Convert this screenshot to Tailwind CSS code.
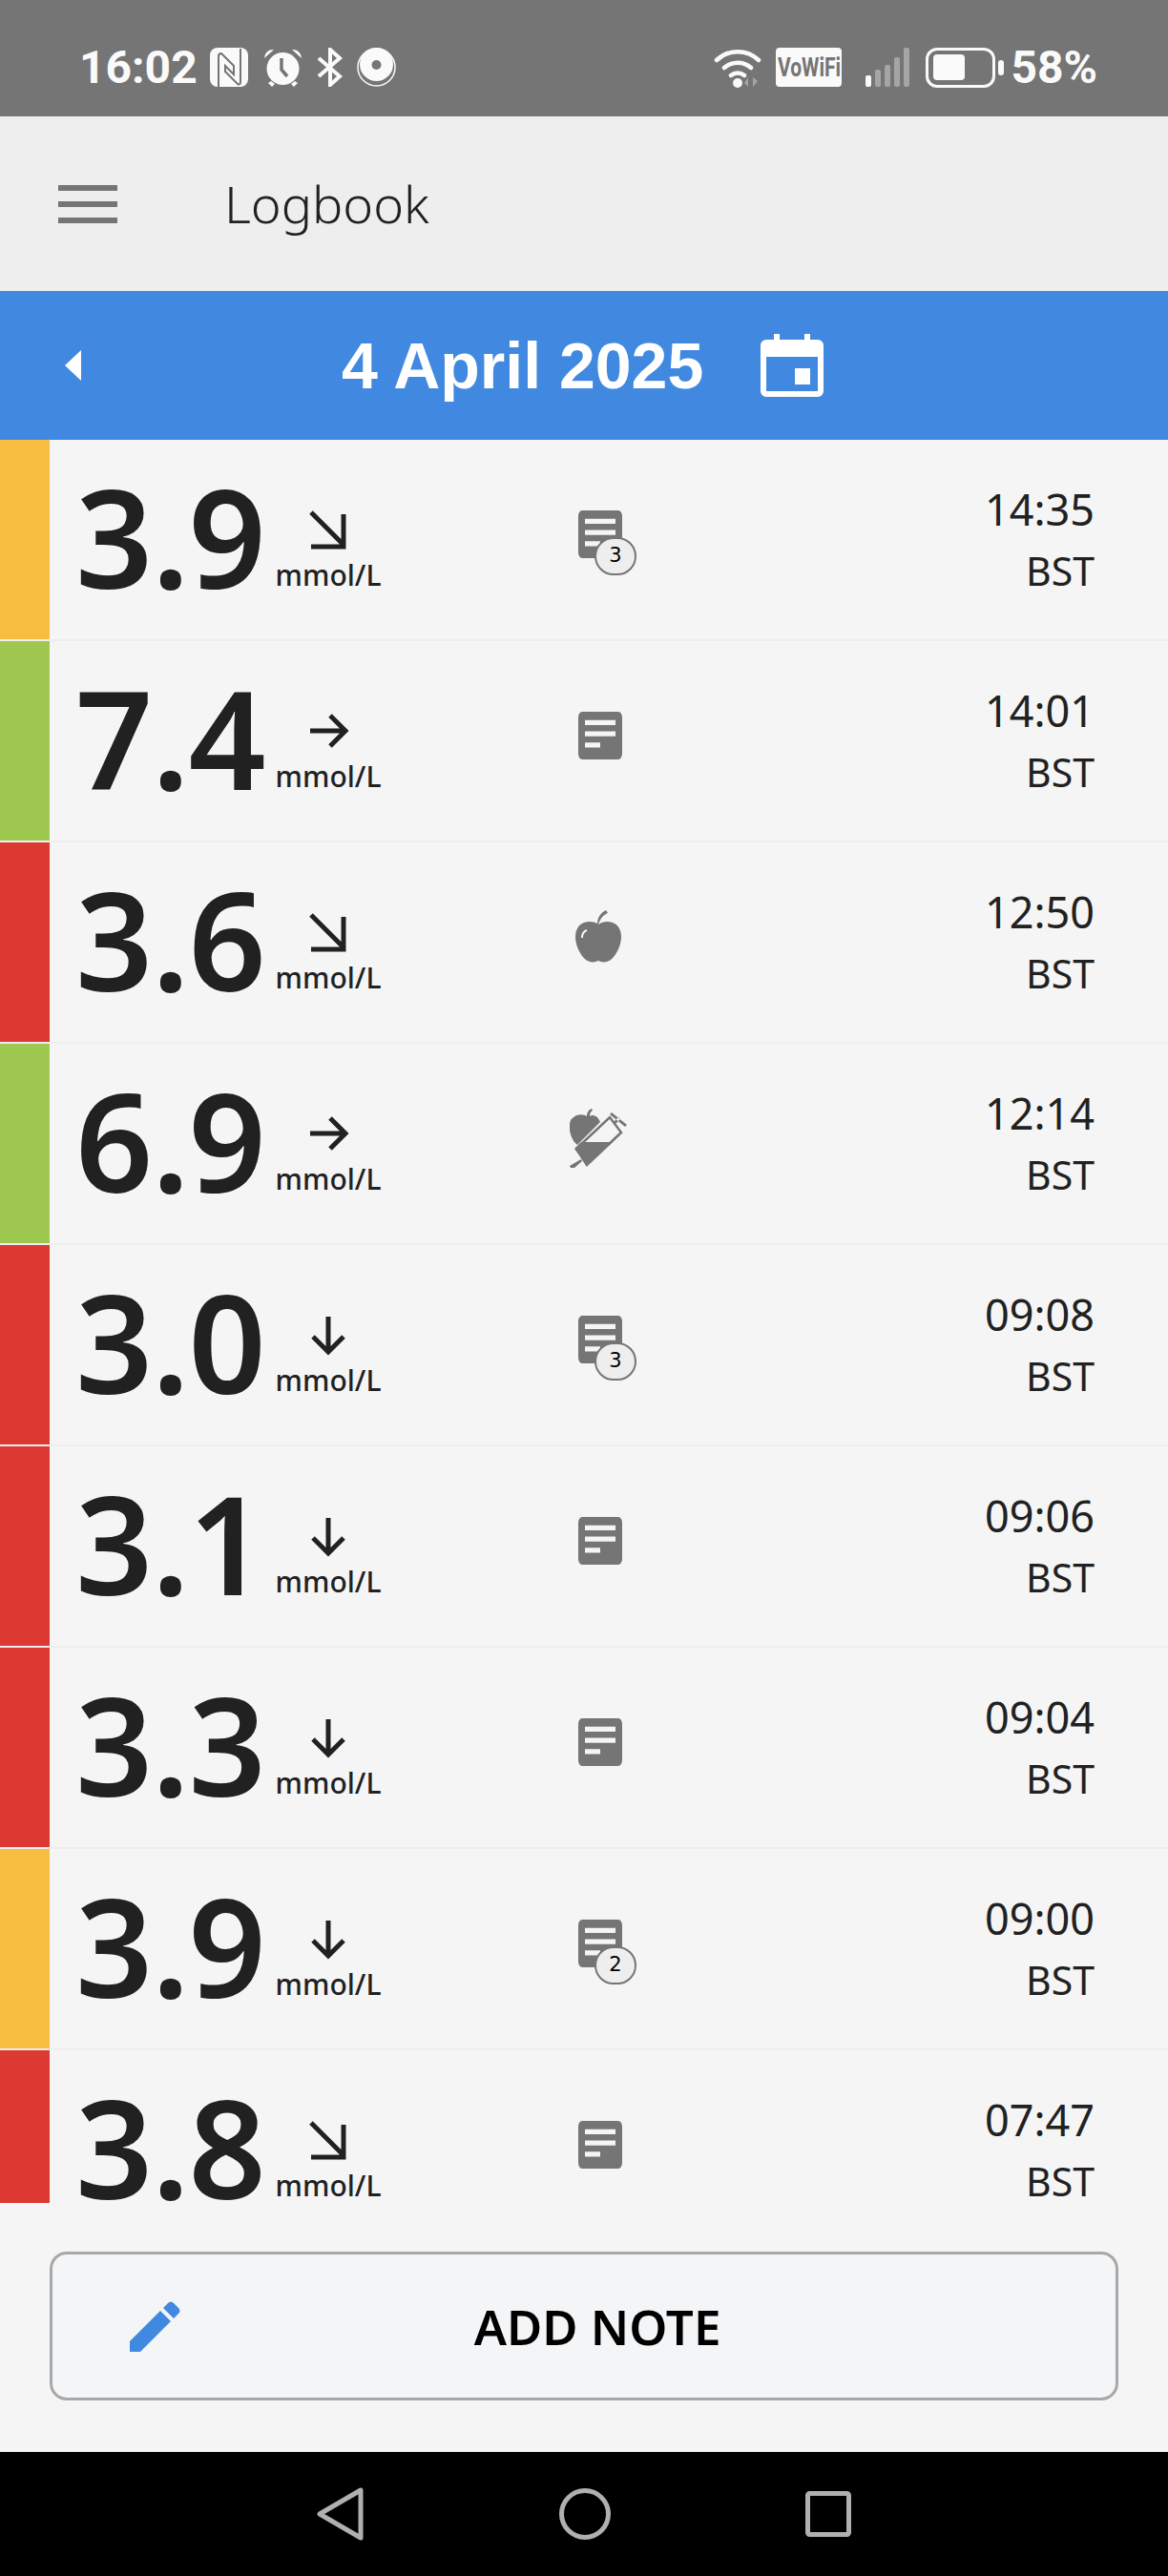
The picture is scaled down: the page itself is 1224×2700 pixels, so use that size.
<!DOCTYPE html>
<html lang="en">
<head>
<meta charset="UTF-8">
<title>Logbook</title>
<script src="https://cdn.jsdelivr.net/npm/@tailwindcss/browser@4"></script>
</head>
<body class="bg-[#f5f5f5] font-['Noto_Sans',sans-serif] text-[#212121]">
<svg class="hidden">
  <symbol id="note" viewBox="0 0 46 34" preserveAspectRatio="none"><path fill-rule="evenodd" fill="#757575" d="M4 0h38a4 4 0 0 1 4 4v26a4 4 0 0 1-4 4H4a4 4 0 0 1-4-4V4a4 4 0 0 1 4-4zM7 6v3.5h32V6zM7 14v3.5h32V14zM7 22v3.5h16V22z"/></symbol>
  <symbol id="down" viewBox="0 0 44 44"><path d="M22 3v36M6 24l16 16 16-16" fill="none" stroke="#212121" stroke-width="5"/></symbol>
  <symbol id="right" viewBox="0 0 44 44"><path d="M3 22h36M24 6l16 16-16 16" fill="none" stroke="#212121" stroke-width="5"/></symbol>
  <symbol id="diag" viewBox="0 0 44 44"><path d="M4 4l34 34M38 6v34H4" fill="none" stroke="#212121" stroke-width="5"/></symbol>
</svg>

<div class="flex h-[2700px] w-[1224px] flex-col overflow-hidden">
  <!-- status bar -->
  <div class="flex h-[122px] items-center justify-between bg-[#757575] pl-[83px] pr-[74px] pt-[19px] text-[#fafafa]">
    <div class="flex items-center">
      <span class="font-['Roboto',sans-serif] text-[48px] font-bold leading-none">16:02</span>
      <svg class="ml-[13px]" width="40" height="41" viewBox="0 0 40 41"><rect width="40" height="41" rx="8" fill="#fafafa"/><path d="M9 41V9c0-2 1-3 3-3l13 13v9l-9-9v6l13 13c2 1 3 0 3-2V1" fill="none" stroke="#757575" stroke-width="2"/></svg>
      <svg class="ml-[16px]" width="41" height="41" viewBox="0 0 41 41"><circle cx="20.5" cy="22" r="17" fill="#fafafa"/><path fill="#fafafa" d="M1 11a9 9 0 0 1 10-9zM40 11a9 9 0 0 0-10-9zM5 37l4 4 3-3-4-3zM36 37l-4 4-3-3 4-3z"/><path d="M19 11v12l6 7" fill="none" stroke="#757575" stroke-width="3.5"/></svg>
      <svg class="ml-[15px]" width="27" height="41" viewBox="0 0 27 41"><path d="M2 11l22 19-10 9V2l10 9L2 30" fill="none" stroke="#fafafa" stroke-width="4"/></svg>
      <svg class="ml-[15px]" width="41" height="41" viewBox="0 0 41 41"><circle cx="20.5" cy="20.5" r="19.5" fill="none" stroke="#fafafa" stroke-width="1.5"/><circle cx="20.5" cy="17.5" r="17.5" fill="#fafafa"/><circle cx="20.5" cy="18" r="5" fill="#757575"/></svg>
    </div>
    <div class="flex items-center">
      <svg width="52" height="44" viewBox="0 0 52 44"><path d="M3 14a32 32 0 0 1 44 0M11 22a21 21 0 0 1 28 0M18 30a11 11 0 0 1 14 0" fill="none" stroke="#fafafa" stroke-width="4.5" stroke-linecap="round"/><circle cx="25" cy="38" r="5" fill="#fafafa"/><path d="M36 42V32l-4 6zM41 32v10l5-6z" fill="#a5a5a5"/></svg>
      <span class="ml-[13px] flex h-[41px] w-[69px] items-center justify-center rounded-[4px] bg-[#fafafa] font-['Roboto',sans-serif] text-[28px] font-bold text-[#757575]"><span class="inline-block scale-x-75">VoWiFi</span></span>
      <div class="ml-[25px] flex h-[41px] w-[46px] items-end justify-between">
        <span class="h-[12px] w-[6px] rounded-[2px] bg-[#fafafa]"></span>
        <span class="h-[18px] w-[6px] rounded-[2px] bg-[#a5a5a5]"></span>
        <span class="h-[23px] w-[6px] rounded-[2px] bg-[#a5a5a5]"></span>
        <span class="h-[31px] w-[6px] rounded-[2px] bg-[#a5a5a5]"></span>
        <span class="h-[41px] w-[6px] rounded-[2px] bg-[#a5a5a5]"></span>
      </div>
      <div class="ml-[17px] flex h-[42px] w-[73px] items-center rounded-[12px] border-[3px] border-[#fafafa] pl-[5px]">
        <span class="h-[27px] w-[33px] rounded-[4px] bg-[#fafafa]"></span>
      </div>
      <span class="ml-[3px] h-[16px] w-[6px] rounded-[3px] bg-[#fafafa]"></span>
      <span class="ml-[7px] font-['Roboto',sans-serif] text-[48px] font-bold leading-none">58%</span>
    </div>
  </div>

  <!-- app bar -->
  <div class="flex h-[183px] items-center bg-[#eeeeee] pl-[61px]">
    <div class="flex w-[62px] flex-col gap-[11px]">
      <span class="h-[6px] bg-[#757575]"></span>
      <span class="h-[6px] bg-[#757575]"></span>
      <span class="h-[6px] bg-[#757575]"></span>
    </div>
    <span class="mb-[2px] ml-[112px] text-[54px] font-light leading-none">Logbook</span>
  </div>

  <!-- date bar -->
  <div class="flex h-[156px] items-center bg-[#4189e0] text-white">
    <svg class="ml-[68px]" width="18" height="32" viewBox="0 0 18 32"><path d="M17 0v32L0 16z" fill="#fff"/></svg>
    <span class="ml-[272px] font-['Liberation_Sans',sans-serif] text-[68px] font-bold leading-none">4 April 2025</span>
    <svg class="ml-[60px]" width="66" height="66" viewBox="0 0 66 66"><path fill="#fff" fill-rule="evenodd" d="M14 0h6v6h26V0h6v6h8a6 6 0 0 1 6 6v48a6 6 0 0 1-6 6H6a6 6 0 0 1-6-6V12a6 6 0 0 1 6-6h8zM6 24v36h54V24zM36 36h16v17H36z"/></svg>
  </div>

  <!-- readings -->
  <div class="h-[1848px] overflow-hidden">
    <div class="flex h-[211px] border-b-2 border-[#eeeeee]">
      <div class="w-[52px] bg-[#f6bd41]"></div>
      <div class="ml-[27px] w-[206px] text-[142px] font-semibold leading-[202px] tracking-[-1px]">3.9</div>
      <div class="ml-[2px] flex w-[114px] flex-col items-center pt-[72px]"><svg width="44" height="44"><use href="#diag"/></svg><span class="mt-[8px] text-[30px] font-medium leading-[36px]">mmol/L</span></div>
      <div class="ml-[205px] flex w-[64px] items-center pb-[12px]"><div class="relative"><svg class="block" width="46" height="50"><use href="#note"/></svg><span class="absolute left-[17px] top-[28px] flex h-[40px] w-[44px] items-center justify-center rounded-full border-2 border-[#757575] bg-[#eeeeee] font-['DejaVu_Sans',sans-serif] text-[21px] leading-none text-black">3</span></div></div>
      <div class="ml-auto mr-[77px] flex flex-col items-end pt-[41px] leading-[64px]"><span class="text-[45px]">14:35</span><span class="text-[41px]">BST</span></div>
    </div>
    <div class="flex h-[211px] border-b-2 border-[#eeeeee]">
      <div class="w-[52px] bg-[#9fc851]"></div>
      <div class="ml-[27px] w-[206px] text-[142px] font-semibold leading-[202px] tracking-[-1px]">7.4</div>
      <div class="ml-[2px] flex w-[114px] flex-col items-center pt-[72px]"><svg width="44" height="44"><use href="#right"/></svg><span class="mt-[8px] text-[30px] font-medium leading-[36px]">mmol/L</span></div>
      <div class="ml-[205px] flex w-[64px] items-center pb-[12px]"><svg width="46" height="50"><use href="#note"/></svg></div>
      <div class="ml-auto mr-[77px] flex flex-col items-end pt-[41px] leading-[64px]"><span class="text-[45px]">14:01</span><span class="text-[41px]">BST</span></div>
    </div>
    <div class="flex h-[211px] border-b-2 border-[#eeeeee]">
      <div class="w-[52px] bg-[#dd3933]"></div>
      <div class="ml-[27px] w-[206px] text-[142px] font-semibold leading-[202px] tracking-[-1px]">3.6</div>
      <div class="ml-[2px] flex w-[114px] flex-col items-center pt-[72px]"><svg width="44" height="44"><use href="#diag"/></svg><span class="mt-[8px] text-[30px] font-medium leading-[36px]">mmol/L</span></div>
      <div class="ml-[205px] flex w-[64px] items-center pb-[12px]"><svg class="-ml-[3px]" width="48" height="56" viewBox="0 0 48 56"><path fill="#757575" d="M24 15c4-3 10-4 15-2 6 2 9 8 9 15 0 9-5 19-11 24-4 3-9 3-13 1-4 2-9 2-13-1C5 47 0 37 0 28c0-7 3-13 9-15 5-2 11-1 14 1 0-6 3-11 9-14l2 3c-5 2-8 6-10 12z"/><path d="M7 29c0-4 2-7 5-8" fill="none" stroke="#f5f5f5" stroke-width="2"/></svg></div>
      <div class="ml-auto mr-[77px] flex flex-col items-end pt-[41px] leading-[64px]"><span class="text-[45px]">12:50</span><span class="text-[41px]">BST</span></div>
    </div>
    <div class="flex h-[211px] border-b-2 border-[#eeeeee]">
      <div class="w-[52px] bg-[#9fc851]"></div>
      <div class="ml-[27px] w-[206px] text-[142px] font-semibold leading-[202px] tracking-[-1px]">6.9</div>
      <div class="ml-[2px] flex w-[114px] flex-col items-center pt-[72px]"><svg width="44" height="44"><use href="#right"/></svg><span class="mt-[8px] text-[30px] font-medium leading-[36px]">mmol/L</span></div>
      <div class="ml-[205px] flex w-[64px] items-center pb-[12px]"><svg class="-ml-[9px] shrink-0" width="60" height="62" viewBox="0 0 60 62"><path fill="#757575" d="M3 10C8 5 15 6 18 8c0-4 2-7 5-8l1 2c-2 1-3 3-3 6 3-2 8-1 11 6L8 38C3 34-1 25 0 17c0-3 1-6 3-7z"/><path fill="none" stroke="#757575" stroke-width="2.5" d="M7 42L42 9l12 16-36 34z"/><path fill="#757575" d="M12 35h33L18 60 5 42zM12 53l-12 7 1 2h4l8-7zM48 16l5-5-2-2-5 5zM44 4l16 13-2 2L42 6z"/></svg></div>
      <div class="ml-auto mr-[77px] flex flex-col items-end pt-[41px] leading-[64px]"><span class="text-[45px]">12:14</span><span class="text-[41px]">BST</span></div>
    </div>
    <div class="flex h-[211px] border-b-2 border-[#eeeeee]">
      <div class="w-[52px] bg-[#dd3933]"></div>
      <div class="ml-[27px] w-[206px] text-[142px] font-semibold leading-[202px] tracking-[-1px]">3.0</div>
      <div class="ml-[2px] flex w-[114px] flex-col items-center pt-[72px]"><svg width="44" height="44"><use href="#down"/></svg><span class="mt-[8px] text-[30px] font-medium leading-[36px]">mmol/L</span></div>
      <div class="ml-[205px] flex w-[64px] items-center pb-[12px]"><div class="relative"><svg class="block" width="46" height="50"><use href="#note"/></svg><span class="absolute left-[17px] top-[28px] flex h-[40px] w-[44px] items-center justify-center rounded-full border-2 border-[#757575] bg-[#eeeeee] font-['DejaVu_Sans',sans-serif] text-[21px] leading-none text-black">3</span></div></div>
      <div class="ml-auto mr-[77px] flex flex-col items-end pt-[41px] leading-[64px]"><span class="text-[45px]">09:08</span><span class="text-[41px]">BST</span></div>
    </div>
    <div class="flex h-[211px] border-b-2 border-[#eeeeee]">
      <div class="w-[52px] bg-[#dd3933]"></div>
      <div class="ml-[27px] w-[206px] text-[142px] font-semibold leading-[202px] tracking-[-1px]">3.1</div>
      <div class="ml-[2px] flex w-[114px] flex-col items-center pt-[72px]"><svg width="44" height="44"><use href="#down"/></svg><span class="mt-[8px] text-[30px] font-medium leading-[36px]">mmol/L</span></div>
      <div class="ml-[205px] flex w-[64px] items-center pb-[12px]"><svg width="46" height="50"><use href="#note"/></svg></div>
      <div class="ml-auto mr-[77px] flex flex-col items-end pt-[41px] leading-[64px]"><span class="text-[45px]">09:06</span><span class="text-[41px]">BST</span></div>
    </div>
    <div class="flex h-[211px] border-b-2 border-[#eeeeee]">
      <div class="w-[52px] bg-[#dd3933]"></div>
      <div class="ml-[27px] w-[206px] text-[142px] font-semibold leading-[202px] tracking-[-1px]">3.3</div>
      <div class="ml-[2px] flex w-[114px] flex-col items-center pt-[72px]"><svg width="44" height="44"><use href="#down"/></svg><span class="mt-[8px] text-[30px] font-medium leading-[36px]">mmol/L</span></div>
      <div class="ml-[205px] flex w-[64px] items-center pb-[12px]"><svg width="46" height="50"><use href="#note"/></svg></div>
      <div class="ml-auto mr-[77px] flex flex-col items-end pt-[41px] leading-[64px]"><span class="text-[45px]">09:04</span><span class="text-[41px]">BST</span></div>
    </div>
    <div class="flex h-[211px] border-b-2 border-[#eeeeee]">
      <div class="w-[52px] bg-[#f6bd41]"></div>
      <div class="ml-[27px] w-[206px] text-[142px] font-semibold leading-[202px] tracking-[-1px]">3.9</div>
      <div class="ml-[2px] flex w-[114px] flex-col items-center pt-[72px]"><svg width="44" height="44"><use href="#down"/></svg><span class="mt-[8px] text-[30px] font-medium leading-[36px]">mmol/L</span></div>
      <div class="ml-[205px] flex w-[64px] items-center pb-[12px]"><div class="relative"><svg class="block" width="46" height="50"><use href="#note"/></svg><span class="absolute left-[17px] top-[28px] flex h-[40px] w-[44px] items-center justify-center rounded-full border-2 border-[#757575] bg-[#eeeeee] font-['DejaVu_Sans',sans-serif] text-[21px] leading-none text-black">2</span></div></div>
      <div class="ml-auto mr-[77px] flex flex-col items-end pt-[41px] leading-[64px]"><span class="text-[45px]">09:00</span><span class="text-[41px]">BST</span></div>
    </div>
    <div class="flex h-[211px] border-b-2 border-[#eeeeee]">
      <div class="w-[52px] bg-[#dd3933]"></div>
      <div class="ml-[27px] w-[206px] text-[142px] font-semibold leading-[202px] tracking-[-1px]">3.8</div>
      <div class="ml-[2px] flex w-[114px] flex-col items-center pt-[72px]"><svg width="44" height="44"><use href="#diag"/></svg><span class="mt-[8px] text-[30px] font-medium leading-[36px]">mmol/L</span></div>
      <div class="ml-[205px] flex w-[64px] items-center pb-[12px]"><svg width="46" height="50"><use href="#note"/></svg></div>
      <div class="ml-auto mr-[77px] flex flex-col items-end pt-[41px] leading-[64px]"><span class="text-[45px]">07:47</span><span class="text-[41px]">BST</span></div>
    </div>
  </div>

  <!-- add note -->
  <div class="flex h-[261px] items-start bg-[#f5f5f5] px-[52px] pt-[51px]">
    <div class="relative flex h-[156px] w-full items-center justify-center rounded-[18px] border-[3px] border-[#a8a8a8] bg-[#f4f5f7]">
      <svg class="absolute left-[81px] top-[48px]" width="54" height="54" viewBox="0 0 54 54"><path fill="#4189e0" d="M0 43L32 11l11 11L11 54H0zM35 8l5-5c2-2 4-2 6 0l5 5c2 2 2 4 0 6l-5 5z"/></svg>
      <span class="ml-[28px] text-[51px] font-semibold leading-none text-black">ADD NOTE</span>
    </div>
  </div>

  <!-- nav bar -->
  <div class="flex h-[130px] items-center justify-center gap-[204px] bg-black">
    <svg width="50" height="56" viewBox="0 0 50 56"><path d="M46 3v50L3 28z" fill="none" stroke="#b0b0b0" stroke-width="5" stroke-linejoin="round"/></svg>
    <svg width="54" height="54" viewBox="0 0 54 54"><circle cx="27" cy="27" r="24.5" fill="none" stroke="#b0b0b0" stroke-width="5"/></svg>
    <svg width="48" height="48" viewBox="0 0 48 48"><rect x="2.5" y="2.5" width="43" height="43" rx="2" fill="none" stroke="#b0b0b0" stroke-width="5"/></svg>
  </div>
</div>
</body>
</html>
